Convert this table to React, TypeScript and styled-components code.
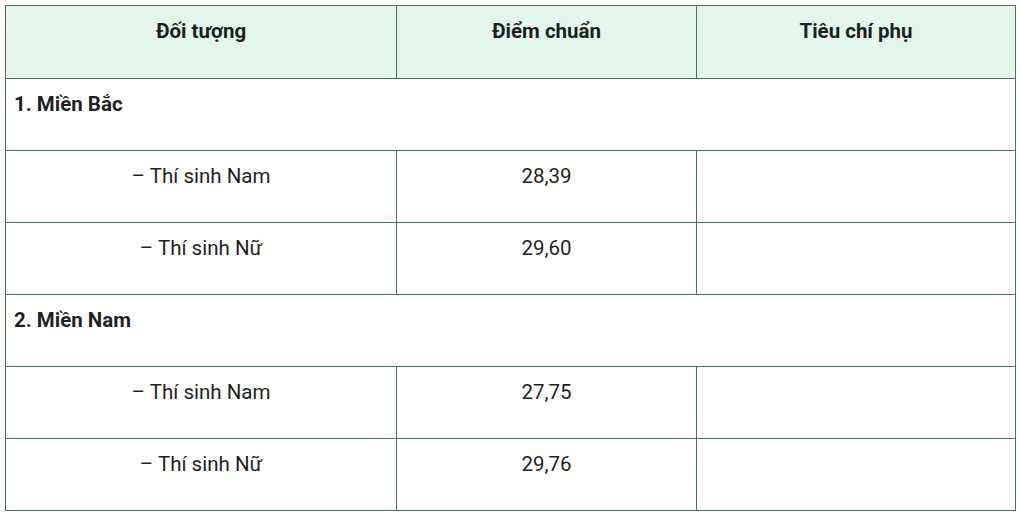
import { Fragment } from 'react';
import styled, { createGlobalStyle } from 'styled-components';

const GlobalStyle = createGlobalStyle`
  html, body {
    margin: 0;
    padding: 0;
    background: #ffffff;
  }
  body {
    font-family: Roboto, "Noto Sans", "Liberation Sans", sans-serif;
    color: #1f1f1f;
  }
`

const Wrapper = styled.div`
  padding: 5px 5px 0 5px;
`

const Table = styled.table`
  width: 1010px;
  border-collapse: collapse;
  table-layout: fixed;
  font-size: 20.5px;
  line-height: 24px;
`

const HeadCell = styled.th`
  background-color: #e3f6ea;
  border: 1px solid #477554;
  height: 73px;
  box-sizing: border-box;
  padding: 13px 12px 34px;
  font-weight: 700;
  text-align: center;
  vertical-align: top;
`

const Cell = styled.td<{ $center?: boolean; $bold?: boolean }>`
  border: 1px solid #477554;
  height: 71px;
  box-sizing: border-box;
  padding: 13px 8px 34px;
  text-align: ${p => (p.$center ? 'center' : 'left')};
  font-weight: ${p => (p.$bold ? 700 : 400)};
  vertical-align: top;
`

type Group = {
  title: string
  rows: { label: string; score: string }[]
}

const groups: Group[] = [
  {
    title: '1. Miền Bắc',
    rows: [
      { label: '– Thí sinh Nam', score: '28,39' },
      { label: '– Thí sinh Nữ', score: '29,60' },
    ],
  },
  {
    title: '2. Miền Nam',
    rows: [
      { label: '– Thí sinh Nam', score: '27,75' },
      { label: '– Thí sinh Nữ', score: '29,76' },
    ],
  },
]

export default function App() {
  return (
    <Wrapper>
      <GlobalStyle />
      <Table>
        <colgroup>
          <col style={{ width: 391 }} />
          <col style={{ width: 300 }} />
          <col style={{ width: 319 }} />
        </colgroup>
        <thead>
          <tr>
            <HeadCell>Đối tượng</HeadCell>
            <HeadCell>Điểm chuẩn</HeadCell>
            <HeadCell>Tiêu chí phụ</HeadCell>
          </tr>
        </thead>
        <tbody>
          {groups.map(g => (
            <Fragment key={g.title}>
              <tr>
                <Cell colSpan={3} $bold>{g.title}</Cell>
              </tr>
              {g.rows.map((r, i) => (
                <tr key={i}>
                  <Cell $center>{r.label}</Cell>
                  <Cell $center>{r.score}</Cell>
                  <Cell $center></Cell>
                </tr>
              ))}
            </Fragment>
          ))}
        </tbody>
      </Table>
    </Wrapper>
  )
}
